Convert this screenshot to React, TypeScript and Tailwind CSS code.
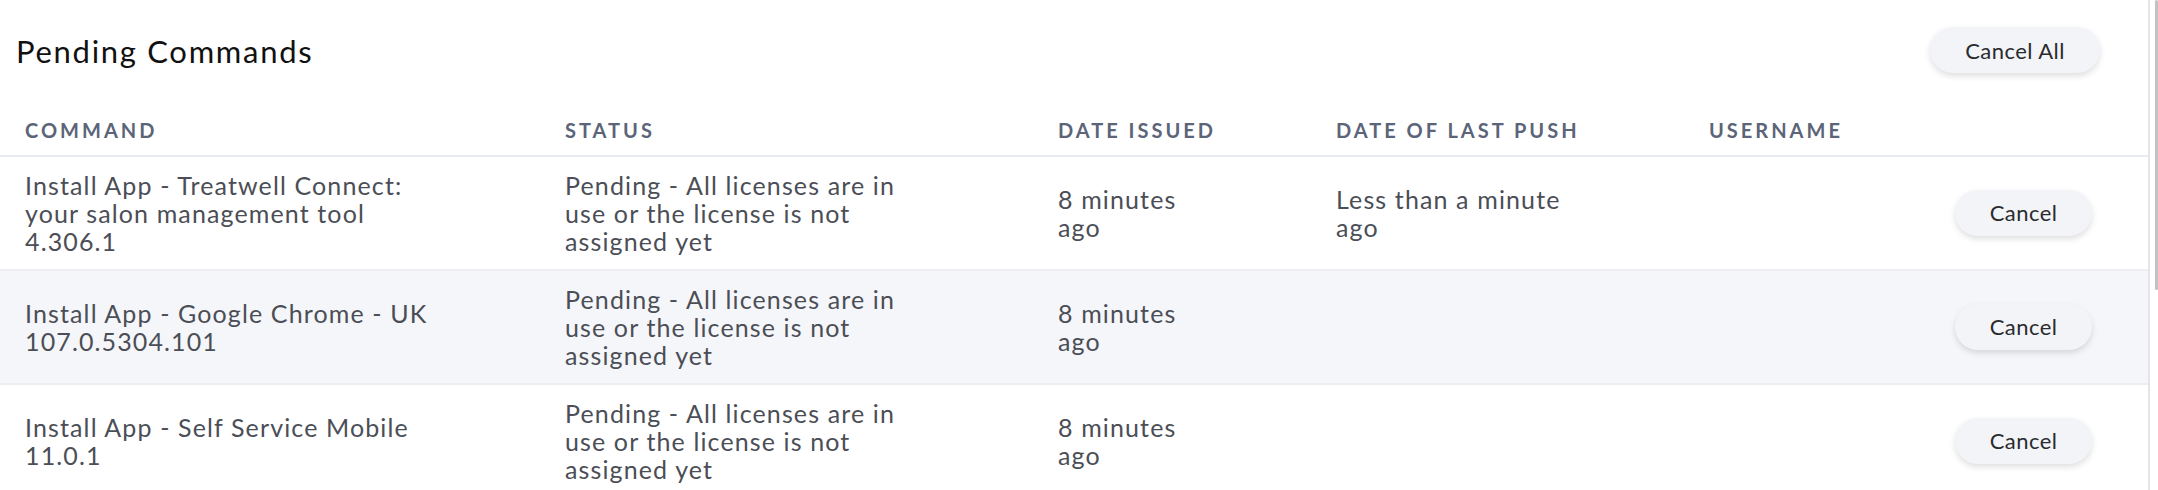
/**
 * Pending commands table with cancel actions.
 */

type Command = {
  name: string[];
  status: string[];
  issued: string[];
  lastPush: string[];
  username: string;
};

const COMMANDS: Command[] = [
  {
    name: ['Install App - Treatwell Connect:', 'your salon management tool', '4.306.1'],
    status: ['Pending - All licenses are in', 'use or the license is not', 'assigned yet'],
    issued: ['8 minutes', 'ago'],
    lastPush: ['Less than a minute', 'ago'],
    username: '',
  },
  {
    name: ['Install App - Google Chrome - UK', '107.0.5304.101'],
    status: ['Pending - All licenses are in', 'use or the license is not', 'assigned yet'],
    issued: ['8 minutes', 'ago'],
    lastPush: [],
    username: '',
  },
  {
    name: ['Install App - Self Service Mobile', '11.0.1'],
    status: ['Pending - All licenses are in', 'use or the license is not', 'assigned yet'],
    issued: ['8 minutes', 'ago'],
    lastPush: [],
    username: '',
  },
];

const COLUMNS = ['Command', 'Status', 'Date Issued', 'Date of Last Push', 'Username'];

const GRID = 'grid grid-cols-[540px_493px_278px_373px_1fr_137px] pl-[25px] pr-[56px]';

function Lines({ lines }: { lines: string[] }) {
  return (
    <div>
      {lines.map((line, i) => (
        <div key={i}>{line}</div>
      ))}
    </div>
  );
}

function PillButton({ label, width }: { label: string; width: string }) {
  return (
    <button
      className={`${width} h-[46px] rounded-full bg-[#f3f4f8] text-[22px] tracking-[0.02em] text-[#2a2b2e] shadow-[0_3px_6px_rgba(0,0,0,0.13)]`}
    >
      {label}
    </button>
  );
}

export default function App() {
  return (
    <div className="flex h-[490px] w-full overflow-hidden bg-white font-['Lato',sans-serif]">
      <div className="flex-1">
        {/* Title bar */}
        <div className="flex items-start justify-between pt-[27px] pl-[16px] pr-[48px]">
          <h1 className="pt-[1px] text-[31px] leading-[46px] tracking-[0.055em] text-[#111111]">
            Pending Commands
          </h1>
          <PillButton label="Cancel All" width="w-[170px]" />
        </div>

        {/* Header */}
        <div className={`${GRID} border-b-2 border-[#e8ebef] pt-[44px] pb-[13px]`}>
          {COLUMNS.map((col) => (
            <div
              key={col}
              className="text-[20px] font-bold uppercase leading-[24px] tracking-[0.15em] text-[#5b6478]"
            >
              {col}
            </div>
          ))}
          <div />
        </div>

        {/* Rows */}
        {COMMANDS.map((cmd, idx) => (
          <div
            key={idx}
            className={`${GRID} min-h-[114px] items-center border-b-2 border-[#eceef2] py-[14px] text-[25px] leading-[28px] tracking-[0.045em] text-[#4b4e56] ${
              idx % 2 === 1 ? 'bg-[#f5f6f9]' : 'bg-white'
            }`}
          >
            <Lines lines={cmd.name} />
            <Lines lines={cmd.status} />
            <Lines lines={cmd.issued} />
            <Lines lines={cmd.lastPush} />
            <div>{cmd.username}</div>
            <PillButton label="Cancel" width="w-[137px]" />
          </div>
        ))}
      </div>

      {/* Scroll track */}
      <div className="relative w-[10px] border-l-2 border-[#e3e5e8]">
        <div className="absolute right-0 top-0 h-[290px] w-[3px] rounded-full bg-[#c2c2c2]" />
      </div>
    </div>
  );
}
